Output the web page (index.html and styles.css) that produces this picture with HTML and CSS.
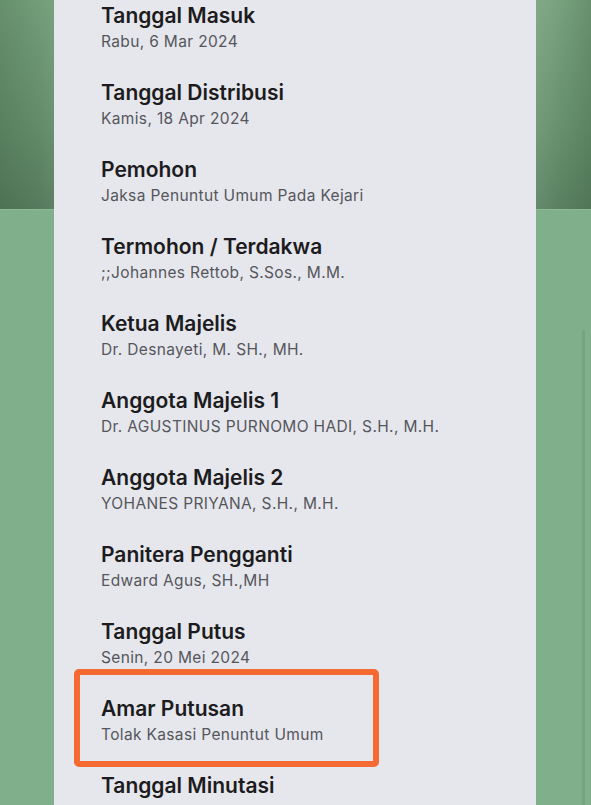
FILE: index.html
```html
<!DOCTYPE html>
<html lang="id">
<head>
<meta charset="utf-8">
<title>Detail Perkara</title>
<link rel="stylesheet" href="styles.css">
</head>
<body>
<div class="stage">
  <div class="side side-left">
    <div class="side-top"></div>
  </div>
  <main class="card">
    <div class="row"><div class="label">Tanggal Masuk</div><div class="value">Rabu, 6 Mar 2024</div></div>
    <div class="row"><div class="label">Tanggal Distribusi</div><div class="value">Kamis, 18 Apr 2024</div></div>
    <div class="row"><div class="label">Pemohon</div><div class="value">Jaksa Penuntut Umum Pada Kejari</div></div>
    <div class="row"><div class="label">Termohon / Terdakwa</div><div class="value">;;Johannes Rettob, S.Sos., M.M.</div></div>
    <div class="row"><div class="label">Ketua Majelis</div><div class="value">Dr. Desnayeti, M. SH., MH.</div></div>
    <div class="row"><div class="label">Anggota Majelis 1</div><div class="value">Dr. AGUSTINUS PURNOMO HADI, S.H., M.H.</div></div>
    <div class="row"><div class="label">Anggota Majelis 2</div><div class="value">YOHANES PRIYANA, S.H., M.H.</div></div>
    <div class="row"><div class="label">Panitera Pengganti</div><div class="value">Edward Agus, SH.,MH</div></div>
    <div class="row"><div class="label">Tanggal Putus</div><div class="value">Senin, 20 Mei 2024</div></div>
    <div class="row row-marked"><div class="label">Amar Putusan</div><div class="value">Tolak Kasasi Penuntut Umum</div><span class="mark"></span></div>
    <div class="row"><div class="label">Tanggal Minutasi</div></div>
  </main>
  <div class="side side-right">
    <div class="side-top"></div>
    <div class="track"><span class="track-line"></span></div>
  </div>
</div>
</body>
</html>
```

FILE: styles.css
```css
html, body {
  margin: 0;
  padding: 0;
}
body {
  width: 591px;
  height: 805px;
  overflow: hidden;
  background: #80b08b;
  font-family: "Inter", "Liberation Sans", sans-serif;
}
.stage {
  display: flex;
  height: 805px;
  overflow: hidden;
}
.side {
  background: #80b08b;
  display: flex;
  flex-direction: column;
}
.side-left {
  width: 54px;
}
.side-right {
  width: 55px;
}
.side-top {
  height: 209px;
  border-bottom: 1px solid #8dba96;
}
.side-left .side-top {
  background:
    linear-gradient(90deg, rgba(40,70,45,0.16) 0%, rgba(40,70,45,0) 70%, rgba(255,255,255,0.05) 100%),
    linear-gradient(180deg, #729d78 0%, #628b69 60%, #55795c 100%);
}
.side-right .side-top {
  background:
    linear-gradient(90deg, rgba(255,255,255,0.08) 0%, rgba(40,70,45,0) 40%, rgba(40,70,45,0.2) 100%),
    linear-gradient(180deg, #78a27e 0%, #68926f 60%, #5a8061 100%);
}
.track {
  flex: 1;
  padding-top: 120px;
  padding-left: 46px;
  display: flex;
}
.track-line {
  width: 3px;
  background: #76a480;
}
.card {
  width: 482px;
  height: 805px;
  overflow: hidden;
  background: #e6e7ec;
  padding-top: 2px;
  box-sizing: border-box;
}
.row {
  position: relative;
  padding-left: 47px;
  height: 77px;
}
.label {
  font-size: 21px;
  font-weight: 600;
  line-height: 28px;
  color: #1c1c20;
}
.value {
  font-size: 15.5px;
  font-weight: 400;
  line-height: 24px;
  color: #55565c;
  letter-spacing: 0.35px;
}
.mark {
  position: absolute;
  left: 20px;
  top: -26px;
  width: 305px;
  height: 98px;
  box-sizing: border-box;
  border: 6px solid #f46a32;
  border-radius: 5px;
}
```
